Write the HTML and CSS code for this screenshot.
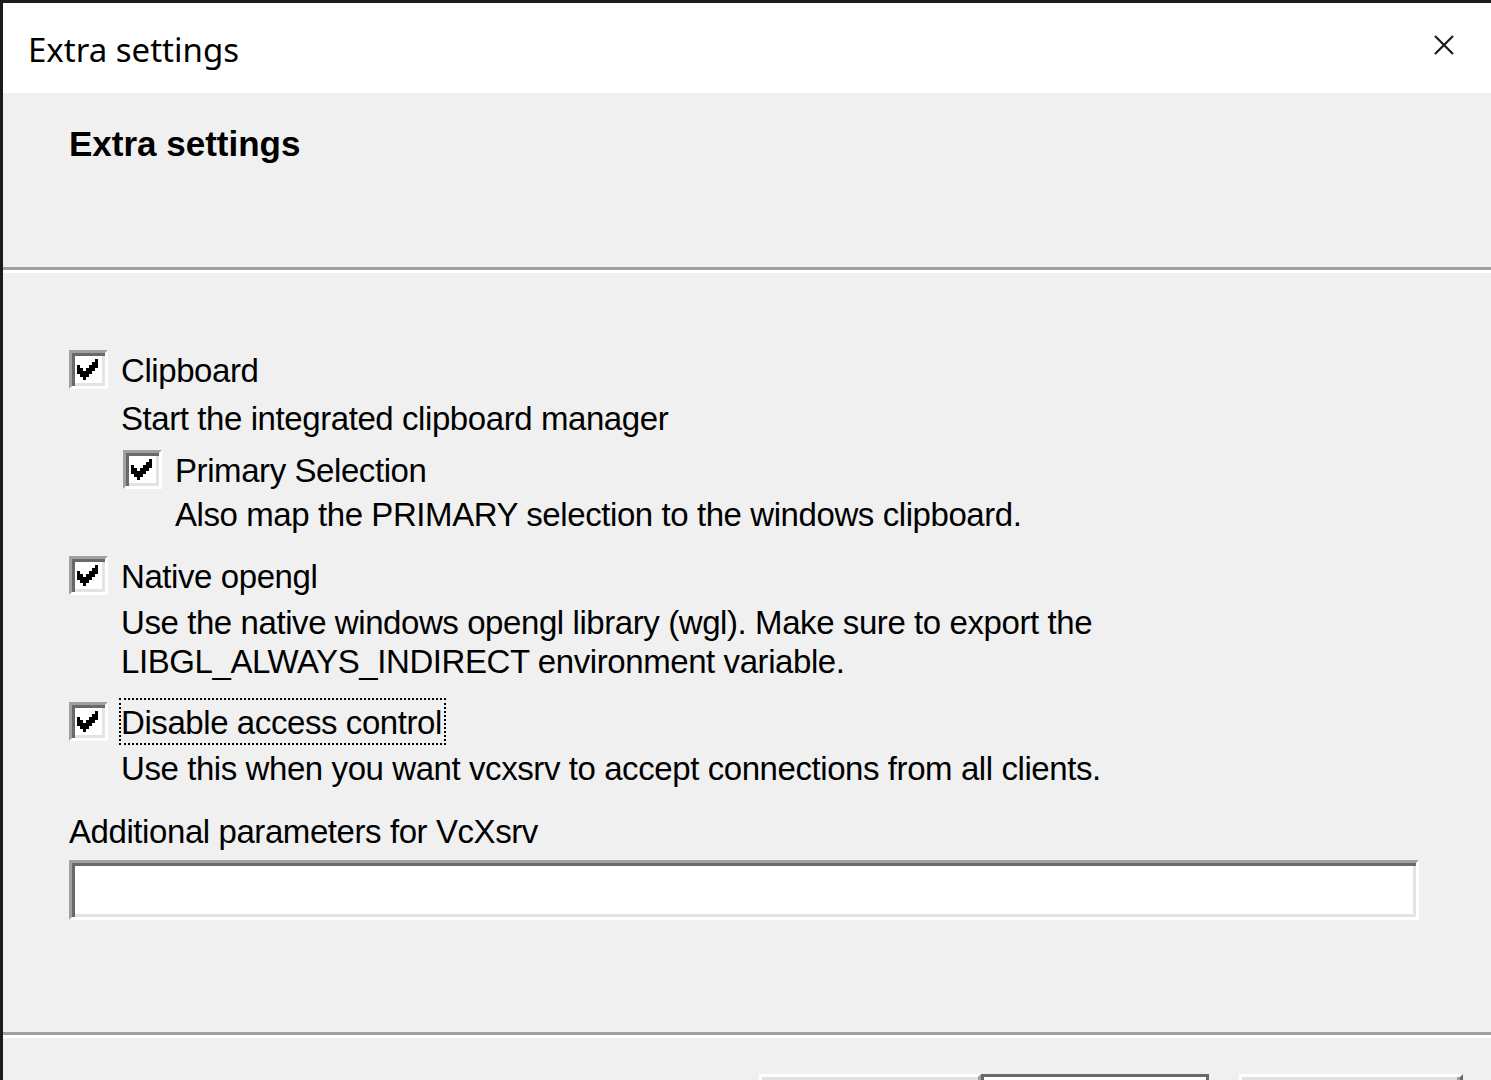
FILE: index.html
```html
<!DOCTYPE html>
<html>
<head>
<meta charset="utf-8">
<link rel="stylesheet" href="styles.css">
</head>
<body>
<div class="window">
  <div class="titlebar">
    <div class="title">Extra settings</div>
    <svg class="close" width="20" height="20" viewBox="0 0 20 20"><path d="M1 1L19 19M19 1L1 19" stroke="#1a1a1a" stroke-width="2.2" fill="none"/></svg>
  </div>
  <div class="header">
    <div class="header-title">Extra settings</div>
  </div>
  <div class="sep"></div>
  <div class="body">
    <div class="options">
      <div class="opt">
        <span class="cb"><svg width="21" height="21" viewBox="0 0 7 7" shape-rendering="crispEdges"><path d="M6 0h1v3h-1zM5 1h1v3h-1zM4 2h1v3h-1zM3 3h1v3h-1zM2 4h1v3h-1zM1 3h1v3h-1zM0 2h1v3h-1z" fill="#000"/></svg></span>
        <span class="lbl">Clipboard</span>
        <div class="desc d1">Start the integrated clipboard manager</div>
        <div class="opt nested">
          <span class="cb"><svg width="21" height="21" viewBox="0 0 7 7" shape-rendering="crispEdges"><path d="M6 0h1v3h-1zM5 1h1v3h-1zM4 2h1v3h-1zM3 3h1v3h-1zM2 4h1v3h-1zM1 3h1v3h-1zM0 2h1v3h-1z" fill="#000"/></svg></span>
          <span class="lbl">Primary Selection</span>
          <div class="desc d2">Also map the PRIMARY selection to the windows clipboard.</div>
        </div>
      </div>
      <div class="opt o2">
        <span class="cb"><svg width="21" height="21" viewBox="0 0 7 7" shape-rendering="crispEdges"><path d="M6 0h1v3h-1zM5 1h1v3h-1zM4 2h1v3h-1zM3 3h1v3h-1zM2 4h1v3h-1zM1 3h1v3h-1zM0 2h1v3h-1z" fill="#000"/></svg></span>
        <span class="lbl">Native opengl</span>
        <div class="desc d3">Use the native windows opengl library (wgl). Make sure to export the<br>LIBGL_ALWAYS_INDIRECT environment variable.</div>
      </div>
      <div class="opt o3">
        <span class="cb"><svg width="21" height="21" viewBox="0 0 7 7" shape-rendering="crispEdges"><path d="M6 0h1v3h-1zM5 1h1v3h-1zM4 2h1v3h-1zM3 3h1v3h-1zM2 4h1v3h-1zM1 3h1v3h-1zM0 2h1v3h-1z" fill="#000"/></svg></span>
        <span class="lbl focus">Disable access control</span>
        <div class="desc d4">Use this when you want vcxsrv to accept connections from all clients.</div>
      </div>
      <div class="param-label">Additional parameters for VcXsrv</div>
      <div class="input"></div>
    </div>
  </div>
  <div class="sep"></div>
  <div class="footer">
    <div class="btn b1"></div>
    <div class="btn b2"></div>
    <div class="btn b3"></div>
  </div>
</div>
</body>
</html>
```
FILE: styles.css
```css
html, body {
  margin: 0;
  padding: 0;
  background: #1b1b1b;
  overflow: hidden;
}
.window {
  height: 1077px;
  margin-top: 3px;
  margin-left: 3px;
  background: #f0f0f0;
  display: flex;
  flex-direction: column;
  overflow: hidden;
  font-family: "Liberation Sans", Arial, sans-serif;
  color: #000;
}
.titlebar {
  height: 90px;
  flex: none;
  background: #fff;
  display: flex;
  align-items: flex-start;
  justify-content: space-between;
  padding-left: 25px;
  padding-right: 37px;
  box-sizing: border-box;
}
.title {
  font-family: "Noto Sans", "Open Sans", sans-serif;
  font-size: 33px;
  line-height: 40px;
  margin-top: 27px;
}
.close {
  margin-top: 32px;
}
.header {
  height: 174px;
  flex: none;
  box-sizing: border-box;
  padding: 33px 0 0 66px;
}
.header-title {
  font-weight: bold;
  font-size: 35px;
  line-height: 36px;
  letter-spacing: 0;
}
.sep {
  flex: none;
  height: 3px;
  background: #a0a0a0;
  border-bottom: 3px solid #fff;
}
.body {
  height: 759px;
  flex: none;
  box-sizing: border-box;
  padding: 73px 0 0 66px;
}
.opt {
  display: grid;
  grid-template-columns: 39px auto;
  column-gap: 11px;
  align-items: center;
  justify-items: start;
}
.opt > .desc, .opt > .nested {
  grid-column: 2;
}
.cb {
  width: 39px;
  height: 39px;
  box-sizing: border-box;
  border-top: 3px solid #a0a0a0;
  border-left: 3px solid #a0a0a0;
  border-right: 3px solid #fff;
  border-bottom: 3px solid #fff;
  box-shadow: inset 3px 3px 0 #696969, inset -3px -3px 0 #e3e3e3;
  background: #fff;
  display: flex;
  align-items: flex-start;
  justify-content: flex-start;
}
.cb svg {
  display: block;
  margin: 6px 0 0 5px;
}
.lbl, .desc, .param-label {
  font-size: 33px;
  line-height: 39px;
  letter-spacing: -0.42px;
  white-space: nowrap;
}
.lbl {
  border: 2px solid transparent;
  padding: 3px 2px 1px 0;
}
.lbl.focus {
  border: 2px dotted #000;
}
.desc {
  padding-left: 2px;
}
.d1 { margin-top: 6px; }
.nested { margin-top: 8px; margin-left: 4px; }
.d2 { margin-top: 2px; }
.o2 { margin-top: 18px; }
.d3 { margin-top: 4px; }
.o3 { margin-top: 17px; }
.d4 { margin-top: 4px; }
.param-label {
  margin-top: 24px;
}
.input {
  margin-top: 9px;
  width: 1350px;
  height: 60px;
  box-sizing: border-box;
  background: #fff;
  border-top: 3px solid #a0a0a0;
  border-left: 3px solid #a0a0a0;
  border-right: 3px solid #fff;
  border-bottom: 3px solid #fff;
  box-shadow: inset 3px 3px 0 #696969, inset -3px -3px 0 #e3e3e3;
}
.footer {
  flex: none;
  display: flex;
  justify-content: flex-end;
  padding: 36px 28px 0 0;
}
.btn {
  height: 60px;
  box-sizing: border-box;
  background: #e1e1e1;
}
.b1 {
  width: 222px;
  border-top: 3px solid #fff;
  border-left: 3px solid #fff;
  border-right: 3px solid #a0a0a0;
}
.b2 {
  width: 228px;
  border: 3px solid #696969;
  box-shadow: inset 3px 3px 0 #fff;
}
.b3 {
  width: 224px;
  margin-left: 30px;
  border-top: 3px solid #fff;
  border-left: 3px solid #fff;
  border-right: 3px solid #696969;
  box-shadow: inset -3px 0 0 #a0a0a0;
}
```
